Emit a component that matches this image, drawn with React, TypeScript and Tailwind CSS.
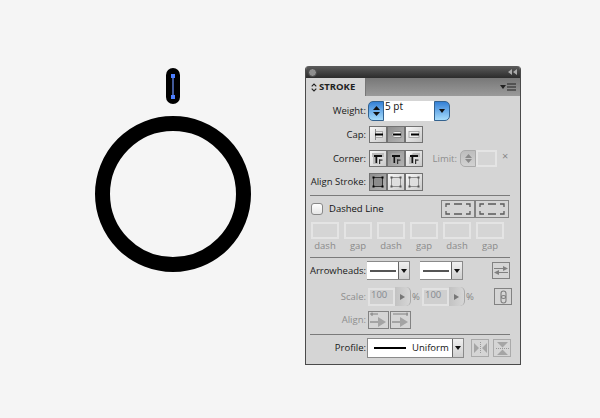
import React from "react";

const font = "font-['Open_Sans',sans-serif]";

// botón gris de la paleta
const Btn = ({
  w = "w-[18px]",
  h = "h-[17px]",
  active = false,
  dim = false,
  faint = false,
  children,
}: {
  w?: string;
  h?: string;
  active?: boolean;
  dim?: boolean;
  faint?: boolean;
  children?: React.ReactNode;
}) => (
  <div
    className={`${w} ${h} shrink-0 flex items-center justify-center border ${
      faint ? "border-[#aaaaaa]" : dim ? "border-[#828282]" : "border-[#727272]"
    } ${
      active
        ? "bg-gradient-to-br from-[#8e8e8e] to-[#b4b4b4]"
        : dim || faint
          ? "bg-[#d5d5d5]"
          : "bg-gradient-to-br from-[#f8f8f8] to-[#cacaca]"
    }`}
  >
    {children}
  </div>
);

const Label = ({ children, dim = false, w = "w-[60px]" }: { children: React.ReactNode; dim?: boolean; w?: string }) => (
  <div className={`${w} shrink-0 whitespace-nowrap text-right text-[9.5px] leading-none ${dim ? "text-[#8e8e8e]" : "text-[#1a1a1a]"}`}>
    {children}
  </div>
);

const Sep = ({ mt }: { mt: string }) => <div className={`${mt} ml-[4px] w-[200px] h-px bg-[#7a7a7a]`} />;

const CapIcon = ({ kind }: { kind: number }) => (
  <svg width="14" height="13" viewBox="0 0 14 13">
    {kind === 0 && <rect x="4.5" y="3.5" width="7" height="6" fill="#ececec" stroke="#9a9a9a" strokeWidth="0.8" />}
    {kind === 1 && <path d="M12 3.5H6a3 3 0 0 0 0 6h6z" fill="#ececec" stroke="#7a7a7a" strokeWidth="0.8" />}
    {kind === 2 && <rect x="2" y="3.5" width="10" height="6" fill="#ececec" stroke="#9a9a9a" strokeWidth="0.8" />}
    {kind === 0 && <rect x="4" y="1" width="1" height="11" fill="#8a8a8a" />}
    <rect x="4" y="5.5" width="8" height="2" fill="#000" />
  </svg>
);

const CornerIcon = ({ kind }: { kind: number }) => (
  <svg width="14" height="13" viewBox="0 0 14 13">
    {kind === 0 && <path d="M1 1h12v4H7v7H2V5H1z" fill="#bcbcbc" />}
    {kind === 1 && <path d="M1.5 2.5L3 1h10v4H7v7H2V4z" fill="#a6a6a6" />}
    {kind === 2 && <path d="M1.5 6L6 1h7v4H7v7H2V6z" fill="#bcbcbc" />}
    <rect x="3" y="3" width="8" height="2" fill="#111" />
    <rect x="4.5" y="3" width="1.6" height="8" fill="#111" />
    <rect x="8" y="7.5" width="1.2" height="4.5" fill="#333" />
    <rect x="8" y="7.5" width="3.5" height="1.2" fill="#333" />
  </svg>
);

const AlignIcon = ({ dark = false }: { dark?: boolean }) => (
  <svg width="14" height="14" viewBox="0 0 14 14">
    <rect x="2.5" y="2.5" width="9" height="9" fill={dark ? "#8c8c8c" : "#dedede"} stroke={dark ? "#333" : "#8f8f8f"} />
    {[
      [1.5, 1.5],
      [10.5, 1.5],
      [1.5, 10.5],
      [10.5, 10.5],
    ].map(([x, y]) => (
      <rect key={`${x}-${y}`} x={x} y={y} width="2" height="2" fill={dark ? "#000" : "#555"} />
    ))}
  </svg>
);

const DashIcon = ({ w }: { w: number }) => (
  <svg width={w} height="14" viewBox={`0 0 ${w} 14`} fill="none" stroke="#5a5a5a" strokeWidth="1.3">
    <path d={`M2 5V2h4M10 2h${w - 20}M${w - 6} 2h4v3M${w - 2} 9v3h-4M${w - 10} 12h-${w - 20}M6 12H2V9`} />
  </svg>
);

const DimInput = () => <div className="w-[28px] h-[17px] shrink-0 border-2 border-[#e4e4e4] bg-[#d5d5d5]" />;
const DimLabel = ({ children, w = "w-[33px]" }: { children: React.ReactNode; w?: string }) => (
  <div className={`${w} shrink-0 pr-[5px] text-center text-[9.5px] leading-none text-[#8a8a8a]`}>{children}</div>
);

const Tri = ({ color = "#111" }: { color?: string }) => (
  <svg width="6" height="4" viewBox="0 0 6 4">
    <path d="M0 0h6L3 4z" fill={color} />
  </svg>
);

const UpDown = ({ color = "#111", gap = 2 }: { color?: string; gap?: number }) => (
  <svg width="7" height={8 + gap} viewBox={`0 0 7 ${8 + gap}`}>
    <path d="M3.5 0L7 4H0z" fill={color} />
    <path d={`M0 ${4 + gap}h7L3.5 ${8 + gap}z`} fill={color} />
  </svg>
);

const ArrowSelect = () => (
  <div className="w-[43px] h-[19px] shrink-0 flex bg-white border-y border-r border-[#8a8a8a] border-l-white">
    <div className="flex-1 flex items-center justify-center">
      <div className="w-[26px] h-[2px] bg-[#555]" />
    </div>
    <div className="w-[11px] shrink-0 flex items-center justify-center bg-gradient-to-b from-[#f0f0f0] to-[#cfcfcf] border-l border-[#666]">
      <Tri />
    </div>
  </div>
);

const ScaleBox = () => (
  <div className="flex h-[19px] shrink-0 items-center">
    <div className="w-[27px] h-[18px] shrink-0 border-2 border-[#e2e2e2] bg-[#cfcfcf] text-[9.5px] leading-none pl-[1px] text-[#858a90]">100</div>
    <div className="w-[16px] h-[19px] shrink-0 flex items-center justify-center rounded-r-[5px] bg-gradient-to-r from-[#c2c2c2] to-[#d6d6d6] border-r border-[#aaa]">
      <svg width="5" height="6" viewBox="0 0 5 6">
        <path d="M0 0l5 3-5 3z" fill="#777" />
      </svg>
    </div>
    <span className="ml-[1px] w-[10px] shrink-0 text-[9.5px] leading-none text-[#858585]">%</span>
  </div>
);

const ArrowAlignIcon = ({ flip = false }: { flip?: boolean }) => (
  <svg width="19" height="16" viewBox="0 0 19 16">
    <path d={flip ? "M2 2h15M16 0.5v3.5" : "M1 2h8M3 0.5v3.5"} stroke="#808080" strokeWidth="1" fill="none" />
    <path d="M1 9h8V5l8 5-8 5v-4H1z" fill="#a4a4a4" />
  </svg>
);

export default function App() {
  return (
    <div className={`w-[600px] h-[418px] overflow-hidden flex bg-[#f5f5f5] ${font}`}>
      {/* mesa de trabajo */}
      <div className="w-[305px] shrink-0 pl-[95px] pt-[68px] flex flex-col">
        <svg width="156" height="36" viewBox="0 0 156 36">
          <rect x="71" y="0" width="14" height="36" rx="7" fill="#000" />
          <path d="M78 8v21" stroke="#6f96ff" strokeWidth="1.2" />
          <rect x="76" y="6" width="4" height="4" fill="#4d7fff" />
          <rect x="76" y="27" width="4" height="4" fill="#4d7fff" />
        </svg>
        <svg className="mt-[12px]" width="156" height="156" viewBox="0 0 156 156">
          <circle cx="78" cy="78" r="70.5" fill="none" stroke="#000" strokeWidth="15" />
        </svg>
      </div>

      {/* panel Stroke */}
      <div className="mt-[66px] w-[216px] h-[299px] shrink-0 flex flex-col border border-[#4a4a4a] border-t-0 rounded-t-[4px] bg-[#d5d5d5] overflow-hidden">
        <div className="h-[12px] shrink-0 flex items-center justify-between pl-[2px] pr-[2px] bg-gradient-to-b from-[#5c5c5c] to-[#2c2c2c]">
          <div className="w-[9px] h-[9px] rounded-full bg-[#8e8e8e] border border-[#444]" />
          <svg width="9" height="6" viewBox="0 0 9 6" className="mr-[1px]">
            <path d="M4 0v6L0 3zM9 0v6L5 3z" fill="#aaa" />
          </svg>
        </div>
        <div className="h-[18px] shrink-0 flex bg-gradient-to-b from-[#787878] to-[#9a9a9a]">
          <div className="w-[60px] shrink-0 flex items-center gap-[2px] pl-[5px] bg-[#d5d5d5] border-r border-[#777]">
            <svg width="6" height="9" viewBox="0 0 6 9" fill="none" stroke="#222" strokeWidth="1.1">
              <path d="M0.7 3.3L3 1l2.3 2.3M0.7 5.7L3 8l2.3-2.3" />
            </svg>
            <span className="text-[9.5px] font-bold leading-none text-[#222]">STROKE</span>
          </div>
          <div className="flex-1 flex items-center justify-end gap-[1px] pr-[4px]">
            <Tri color="#222" />
            <svg width="9" height="8" viewBox="0 0 9 8">
              <path d="M0 1h9M0 4h9M0 7h9" stroke="#222" strokeWidth="1" />
            </svg>
          </div>
        </div>

        {/* Weight */}
        <div className="mt-[5px] h-[20px] shrink-0 flex items-center">
          <Label>Weight:</Label>
          <div className="ml-[2px] w-[16px] h-[20px] shrink-0 flex items-center justify-center rounded-l-[5px] border border-[#33628f] bg-gradient-to-b from-[#3380d6] to-[#a6dcfb]">
            <UpDown />
          </div>
          <div className="w-[50px] h-[20px] shrink-0 bg-white text-[10px] leading-none pl-[1px] text-[#111]">5 pt</div>
          <div className="w-[16px] h-[20px] shrink-0 flex items-center justify-center rounded-r-[5px] border border-[#33628f] bg-gradient-to-b from-[#3380d6] to-[#a6dcfb]">
            <Tri />
          </div>
        </div>

        {/* Cap */}
        <div className="mt-[5px] h-[17px] shrink-0 flex items-center">
          <Label>Cap:</Label>
          <div className="ml-[3px] flex">
            <Btn><CapIcon kind={0} /></Btn>
            <Btn active><CapIcon kind={1} /></Btn>
            <Btn><CapIcon kind={2} /></Btn>
          </div>
        </div>

        {/* Corner */}
        <div className="mt-[7px] h-[17px] shrink-0 flex items-center">
          <Label>Corner:</Label>
          <div className="ml-[3px] flex">
            <Btn><CornerIcon kind={0} /></Btn>
            <Btn active><CornerIcon kind={1} /></Btn>
            <Btn><CornerIcon kind={2} /></Btn>
          </div>
          <Label dim w="w-[34px]">Limit:</Label>
          <div className="ml-[3px] w-[16px] h-[17px] shrink-0 flex items-center justify-center rounded-l-[5px] bg-gradient-to-b from-[#bdbdbd] to-[#d2d2d2] border border-[#aaa]">
            <UpDown color="#8a8a8a" gap={1} />
          </div>
          <div className="w-[21px] h-[17px] shrink-0 border-2 border-[#e4e4e4] bg-[#d5d5d5]" />
          <span className="ml-[5px] -mt-[6px] text-[11px] leading-none text-[#888]">×</span>
        </div>

        {/* Align Stroke */}
        <div className="mt-[6px] h-[18px] shrink-0 flex items-center">
          <Label>Align Stroke:</Label>
          <div className="ml-[3px] flex">
            <Btn h="h-[18px]" active><AlignIcon dark /></Btn>
            <Btn h="h-[18px]"><AlignIcon /></Btn>
            <Btn h="h-[18px]"><AlignIcon /></Btn>
          </div>
        </div>

        <Sep mt="mt-[4px]" />

        {/* Dashed Line */}
        <div className="mt-[4px] h-[18px] shrink-0 flex items-center">
          <div className="ml-[5px] w-[12px] h-[12px] shrink-0 rounded-[3px] border border-[#888] bg-gradient-to-b from-[#fff] to-[#e6e6e6]" />
          <span className="ml-[6px] w-[112px] shrink-0 text-[9.5px] leading-none text-[#111]">Dashed Line</span>
          <Btn w="w-[34px]" h="h-[18px]" dim><DashIcon w={28} /></Btn>
          <Btn w="w-[34px]" h="h-[18px]" dim><DashIcon w={28} /></Btn>
        </div>
        <div className="mt-[4px] ml-[5px] h-[17px] shrink-0 flex gap-[5px]">
          <DimInput />
          <DimInput />
          <DimInput />
          <DimInput />
          <DimInput />
          <DimInput />
        </div>
        <div className="mt-[1px] ml-[5px] h-[12px] shrink-0 flex items-center">
          <DimLabel>dash</DimLabel>
          <DimLabel>gap</DimLabel>
          <DimLabel>dash</DimLabel>
          <DimLabel>gap</DimLabel>
          <DimLabel>dash</DimLabel>
          <DimLabel>gap</DimLabel>
        </div>

        <Sep mt="mt-[5px]" />

        {/* Arrowheads */}
        <div className="mt-[3px] h-[19px] shrink-0 flex items-center">
          <Label>Arrowheads:</Label>
          <div className="ml-px"><ArrowSelect /></div>
          <div className="ml-[10px]"><ArrowSelect /></div>
          <div className="ml-[29px]">
            <Btn dim>
              <svg width="14" height="11" viewBox="0 0 14 11" fill="#808080">
                <path d="M0 3h9V1l5 2.5L9 6V4H0zM14 7H5V5L0 7.5 5 10V8h9z" />
              </svg>
            </Btn>
          </div>
        </div>

        {/* Scale */}
        <div className="mt-[7px] h-[19px] shrink-0 flex items-center">
          <Label dim>Scale:</Label>
          <div className="ml-[2px]"><ScaleBox /></div>
          <ScaleBox />
          <div className="ml-[18px]">
            <Btn h="h-[17px]" dim>
              <svg width="7" height="14" viewBox="0 0 7 14" fill="none" stroke="#808080" strokeWidth="1.1">
                <rect x="1" y="1" width="5" height="7.5" rx="2.5" />
                <rect x="1" y="5.5" width="5" height="7.5" rx="2.5" />
              </svg>
            </Btn>
          </div>
        </div>

        {/* Align */}
        <div className="mt-[5px] h-[18px] shrink-0 flex items-center">
          <Label dim>Align:</Label>
          <div className="ml-[2px] flex gap-px">
            <Btn w="w-[21px]" h="h-[18px]" dim><ArrowAlignIcon /></Btn>
            <Btn w="w-[21px]" h="h-[18px]" dim><ArrowAlignIcon flip /></Btn>
          </div>
        </div>

        <Sep mt="mt-[5px]" />

        {/* Profile */}
        <div className="mt-[3px] h-[20px] shrink-0 flex items-center">
          <Label>Profile:</Label>
          <div className="ml-px w-[97px] h-[20px] shrink-0 flex bg-white border border-[#8a8a8a]">
            <div className="flex-1 flex items-center pl-[6px] overflow-hidden">
              <div className="w-[32px] h-[2px] shrink-0 bg-black" />
              <span className="ml-[6px] text-[9.5px] leading-none text-[#111]">Uniform</span>
            </div>
            <div className="w-[11px] shrink-0 flex items-center justify-center bg-gradient-to-b from-[#f0f0f0] to-[#cfcfcf] border-l border-[#666]">
              <Tri />
            </div>
          </div>
          <div className="ml-[7px]">
            <Btn h="h-[18px]" faint>
              <svg width="13" height="12" viewBox="0 0 13 12" fill="#a5a5a5">
                <path d="M0 1l5 5-5 5zM13 1L8 6l5 5z" />
                <path d="M6.5 0v12" stroke="#999" strokeDasharray="1 1" />
              </svg>
            </Btn>
          </div>
          <div className="ml-[4px]">
            <Btn h="h-[18px]" faint>
              <svg width="13" height="13" viewBox="0 0 13 13" fill="#a5a5a5">
                <path d="M1 0l5.5 5.5L12 0zM1 13l5.5-5.5L12 13z" />
                <path d="M0 6.5h13" stroke="#999" strokeDasharray="1 1" />
              </svg>
            </Btn>
          </div>
        </div>
      </div>
    </div>
  );
}
